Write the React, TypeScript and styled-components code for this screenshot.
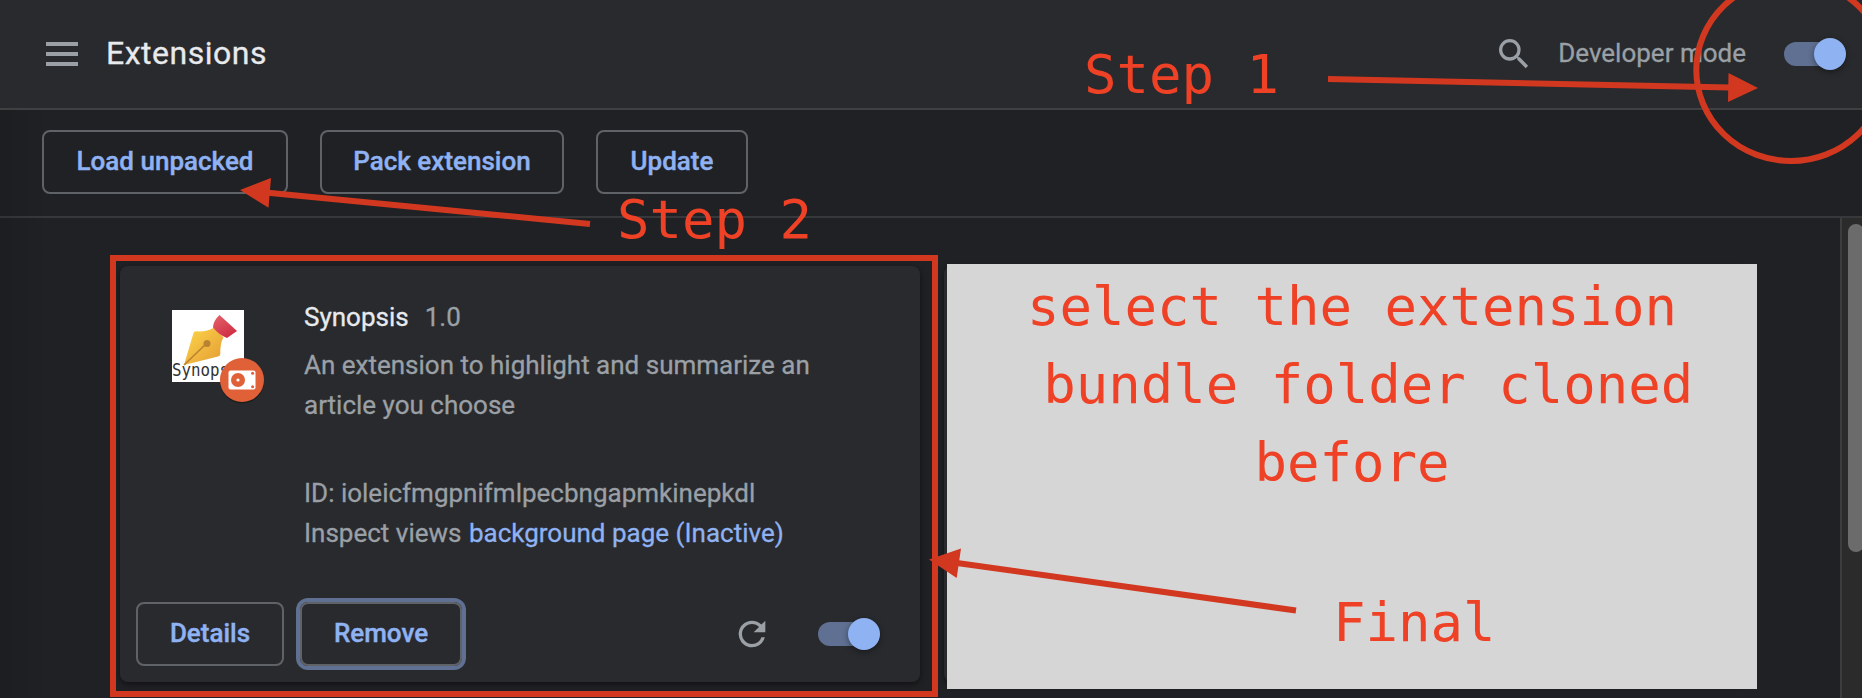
import React from "react";
import styled, { createGlobalStyle } from "styled-components";

const GlobalStyle = createGlobalStyle`
  * { box-sizing: border-box; }
  html, body { margin: 0; padding: 0; background: #202124; overflow: hidden; }
`;

const Page = styled.div`
  position: relative;
  display: flex;
  flex-direction: column;
  width: 1862px;
  height: 698px;
  overflow: hidden;
  background: #202124;
  color: #9aa0a6;
  font: 400 26px/40px Roboto, "Liberation Sans", sans-serif;
  -webkit-text-stroke: 0.3px currentColor;
`;

const Header = styled.header`
  display: flex;
  align-items: center;
  height: 110px;
  padding: 0 16px 0 46px;
  background: #292a2d;
  border-bottom: 2px solid #3f4042;
`;

const MenuButton = styled.div`
  display: flex;
  flex-direction: column;
  gap: 6px;
  width: 32px;
`;

const MenuBar = styled.span`
  height: 4px;
  background: #9aa0a6;
`;

const Title = styled.h1`
  flex: 1;
  margin: 0 0 3px 28px;
  font-size: 32px;
  font-weight: 400;
  letter-spacing: 0.5px;
  color: #e8eaed;
`;

const ModeLabel = styled.span`
  margin: 0 38px 2px 24px;
`;

const Track = styled.span`
  display: flex;
  align-items: center;
  width: 56px;
  height: 24px;
  margin-right: 6px;
  border-radius: 12px;
  background: #5f7092;
`;

const Knob = styled.span`
  flex: none;
  width: 32px;
  height: 32px;
  margin-left: 30px;
  border-radius: 50%;
  background: #8fb2f3;
  box-shadow: 0 2px 6px rgba(0, 0, 0, 0.4);
`;

const Toolbar = styled.div`
  display: flex;
  gap: 32px;
  height: 108px;
  padding: 20px 42px;
  border-bottom: 2px solid #37383b;
`;

const Button = styled.button<{ $width: number; $focused?: boolean }>`
  width: ${(p) => p.$width}px;
  height: 64px;
  padding: 0 0 2px;
  border: 2px solid #5f6368;
  border-radius: 8px;
  background: transparent;
  box-shadow: ${(p) => (p.$focused ? "0 0 0 4px #5f7092" : "none")};
  color: #8fb2f3;
  font: 500 26px/32px Roboto, "Liberation Sans", sans-serif;
  -webkit-text-stroke: 0.4px currentColor;
  white-space: nowrap;
`;

const Content = styled.main`
  display: flex;
  flex: 1;
  justify-content: space-between;
  min-height: 0;
`;

const Cards = styled.div`
  display: flex;
  gap: 24px;
  padding: 48px 0 0 120px;
`;

const Card = styled.article`
  display: flex;
  flex-direction: column;
  width: 800px;
  height: 416px;
  border-radius: 8px;
  background: #292a2d;
  box-shadow: 0 2px 6px rgba(0, 0, 0, 0.5);
`;

const CardBody = styled.div`
  display: flex;
  flex: 1;
  gap: 60px;
  padding: 31px 52px 0;
`;

const Icon = styled.svg`
  display: block;
  flex: none;
`;

const AppIcon = styled(Icon)`
  margin-top: 13px;
  overflow: visible;
`;

const Info = styled.div`
  white-space: nowrap;
`;

const NameRow = styled.div`
  display: flex;
  gap: 16px;
  height: 48px;
`;

const Name = styled.span`
  color: #e8eaed;
`;

const Description = styled.p`
  width: 530px;
  height: 128px;
  margin: 0;
  white-space: normal;
`;

const Link = styled.a`
  margin-left: 1px;
  color: #8fb2f3;
`;

const CardFooter = styled.div`
  display: flex;
  align-items: center;
  height: 96px;
  padding: 0 40px 0 16px;
`;

const ButtonPair = styled.div`
  display: flex;
  flex: 1;
  gap: 16px;
`;

const RefreshIcon = styled(Icon)`
  margin-right: 46px;
`;

const Scrollbar = styled.div`
  width: 22px;
  padding: 6px 0 0 6px;
  overflow: hidden;
  border-left: 2px solid #3d3d3d;
  background: #2b2b2b;
`;

const Thumb = styled.div`
  width: 16px;
  height: 328px;
  border-radius: 8px;
  background: #6b6b6b;
`;

const EdgeShade = styled.div`
  position: absolute;
  left: 0;
  top: 110px;
  bottom: 0;
  width: 50px;
  background: linear-gradient(90deg, rgba(0, 0, 0, 0.1), rgba(0, 0, 0, 0));
`;

const Note = styled.div`
  position: absolute;
  left: 947px;
  top: 264px;
  width: 810px;
  height: 425px;
  padding-top: 4px;
  background: #d6d6d6;
  color: #ee4126;
  font: 400 54px/78px "DejaVu Sans Mono", monospace;
  -webkit-text-stroke: 0;
  text-align: center;
  white-space: pre;
`;

const Label = styled.div<{ $x: number; $y: number }>`
  position: absolute;
  left: ${(p) => p.$x}px;
  top: ${(p) => p.$y}px;
  color: #ee4126;
  font: 400 54px/78px "DejaVu Sans Mono", monospace;
  -webkit-text-stroke: 0;
  white-space: pre;
`;

const Highlight = styled.div`
  position: absolute;
  left: 110px;
  top: 255px;
  width: 828px;
  height: 442px;
  border: 6px solid #d23820;
`;

const Arrows = styled.svg`
  position: absolute;
  inset: 0;
`;

const Toggle = () => (
  <Track>
    <Knob />
  </Track>
);

export default function App() {
  return (
    <Page>
      <GlobalStyle />
      <Header>
        <MenuButton>
          <MenuBar />
          <MenuBar />
          <MenuBar />
        </MenuButton>
        <Title>Extensions</Title>
        <Icon width="40" height="40" viewBox="0 0 24 24" fill="#9aa0a6">
          <path d="M15.5 14h-.79l-.28-.27A6.471 6.471 0 0 0 16 9.5 6.5 6.5 0 1 0 9.5 16c1.61 0 3.09-.59 4.23-1.57l.27.28v.79l5 4.99L20.49 19l-4.99-5zm-6 0C7.01 14 5 11.99 5 9.5S7.01 5 9.5 5 14 7.01 14 9.5 11.99 14 9.5 14z" />
        </Icon>
        <ModeLabel>Developer mode</ModeLabel>
        <Toggle />
      </Header>
      <Toolbar>
        <Button $width={246}>Load unpacked</Button>
        <Button $width={244}>Pack extension</Button>
        <Button $width={152}>Update</Button>
      </Toolbar>
      <Content>
        <Cards>
          <Card>
            <CardBody>
              <AppIcon width="72" height="72" viewBox="0 0 72 72">
                <defs>
                  <linearGradient id="gold" x1="0" y1="0" x2="1" y2="1">
                    <stop offset="0.2" stopColor="#f8cb45" />
                    <stop offset="1" stopColor="#e49a35" />
                  </linearGradient>
                  <linearGradient id="grip" x1="0" y1="0" x2="0.6" y2="1">
                    <stop offset="0" stopColor="#e5636c" />
                    <stop offset="1" stopColor="#d02f43" />
                  </linearGradient>
                </defs>
                <rect width="72" height="72" fill="#fff" />
                <path d="M12 55 21.500 23Q22 21 24.500 21.300 35 22 42 17.500L51.500 27.500Q48 33 48.300 44 48 46 46 46.500Z" fill="url(#gold)" />
                <path d="M12 55 34 34" stroke="#b98232" strokeWidth="1.600" />
                <circle cx="35" cy="33.500" r="3.500" fill="#b98232" />
                <path d="M47.500 5 65 21 55 28Q47 25 41 17.500 41 11 47.500 5Z" fill="url(#grip)" />
                <text x="0" y="66" textLength="57" fontFamily="DejaVu Sans Mono, monospace" fontSize="18" fill="#333" stroke="none" lengthAdjust="spacingAndGlyphs">Synops</text>
                <circle cx="70" cy="71.500" r="22" fill="#000" opacity="0.3" />
                <circle cx="70" cy="70" r="22" fill="#e06038" />
                <rect x="56.500" y="60.500" width="27" height="19" rx="2" fill="#fff" />
                <circle cx="66" cy="70" r="7" fill="#e06038" />
                <circle cx="66" cy="70" r="1.600" fill="#fff" />
                <circle cx="80.600" cy="63.300" r="1.500" fill="#e06038" />
                <circle cx="80.600" cy="76.700" r="1.500" fill="#e06038" />
              </AppIcon>
              <Info>
                <NameRow>
                  <Name>Synopsis</Name>
                  <span>1.0</span>
                </NameRow>
                <Description>An extension to highlight and summarize an article you choose</Description>
                <div>ID: ioleicfmgpnifmlpecbngapmkinepkdl</div>
                <div>
                  Inspect views <Link>background page (Inactive)</Link>
                </div>
              </Info>
            </CardBody>
            <CardFooter>
              <ButtonPair>
                <Button $width={148}>Details</Button>
                <Button $width={162} $focused>
                  Remove
                </Button>
              </ButtonPair>
              <RefreshIcon width="40" height="40" viewBox="0 0 24 24" fill="#9aa0a6">
                <path d="M17.65 6.35A7.958 7.958 0 0 0 12 4a8 8 0 1 0 7.730 10h-2.080A5.990 5.990 0 0 1 12 18c-3.310 0-6-2.690-6-6s2.690-6 6-6c1.660 0 3.140.690 4.220 1.780L13 11h7V4l-2.350 2.350z" />
              </RefreshIcon>
              <Toggle />
            </CardFooter>
          </Card>
          <Card />
        </Cards>
        <Scrollbar>
          <Thumb />
        </Scrollbar>
      </Content>
      <EdgeShade />
      <Note>{"select the extension\n bundle folder cloned\nbefore"}</Note>
      <Highlight />
      <Arrows width="1862" height="698" viewBox="0 0 1862 698" fill="#d23820">
        <g stroke="#d23820" strokeWidth="6">
          <path d="M1328 79 1730 87.500" />
          <path d="M590 224 268 192.700" />
          <path d="M1296 610.500 957 563" />
        </g>
        <path d="M1758 88 1728.500 73 1728 102Z" />
        <path d="M240 190 271 178 268.500 207.700Z" />
        <path d="M929 559.500 961 548.500 956.700 578Z" />
        <ellipse cx="1791" cy="70" rx="94.700" ry="91" fill="none" stroke="#d23820" strokeWidth="6" />
      </Arrows>
      <Label $x={1084} $y={36}>Step 1</Label>
      <Label $x={617} $y={181}>Step 2</Label>
      <Label $x={1333} $y={584}>Final</Label>
    </Page>
  );
}
